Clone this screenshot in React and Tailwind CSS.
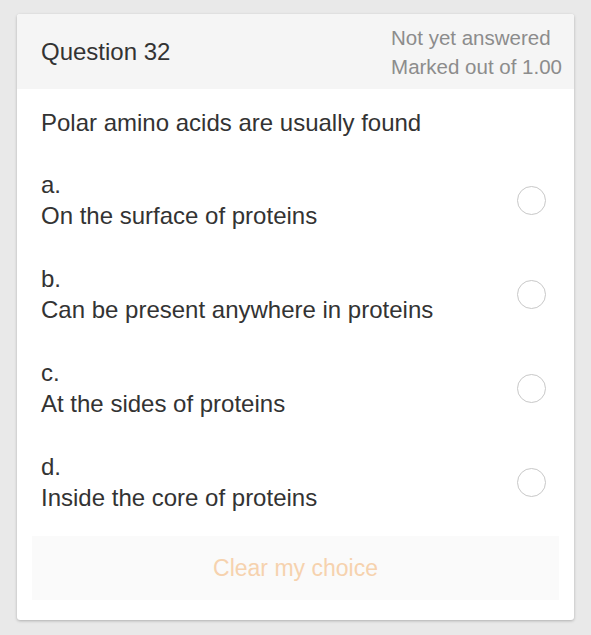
export default function App() {
  const options = [
    { key: "a.", text: "On the surface of proteins" },
    { key: "b.", text: "Can be present anywhere in proteins" },
    { key: "c.", text: "At the sides of proteins" },
    { key: "d.", text: "Inside the core of proteins" },
  ];

  return (
    <div
      className="min-h-[635px] bg-[#e9e9e9] pt-[14px] pl-[17px] pr-[17px] pb-[15px]"
      style={{ fontFamily: '"Liberation Sans", Arial, sans-serif' }}
    >
      <div className="bg-white rounded-[3px] shadow-[0_1px_3px_rgba(0,0,0,0.25)] overflow-hidden">
        <div className="bg-[#f5f5f5] h-[75px] flex items-center justify-between pl-[24px] pr-[12px]">
          <div className="text-[24px] text-[#333] mt-[1px]">Question 32</div>
          <div className="text-[20.5px] text-[#8c8c8c] leading-[29px]">
            <div>Not yet answered</div>
            <div>Marked out of 1.00</div>
          </div>
        </div>

        <div className="px-[24px] pt-[20px] text-[24px] text-[#333] leading-[28px]">
          Polar amino acids are usually found
        </div>

        <div className="mt-[16px]">
          {options.map((o) => (
            <div
              key={o.key}
              className="flex items-center justify-between pl-[24px] pr-[28px] h-[94px]"
            >
              <div className="text-[24px] text-[#333] leading-[31px]">
                <div>{o.key}</div>
                <div>{o.text}</div>
              </div>
              <div className="w-[29px] h-[29px] rounded-full border-[1.5px] border-[#c8c8c8]" />
            </div>
          ))}
        </div>

        <div className="px-[15px] pt-[7px] pb-[20px]">
          <div className="h-[64px] bg-[#fafafa] flex items-center justify-center text-[23px] text-[#f6d2ae]">
            Clear my choice
          </div>
        </div>
      </div>
    </div>
  );
}
